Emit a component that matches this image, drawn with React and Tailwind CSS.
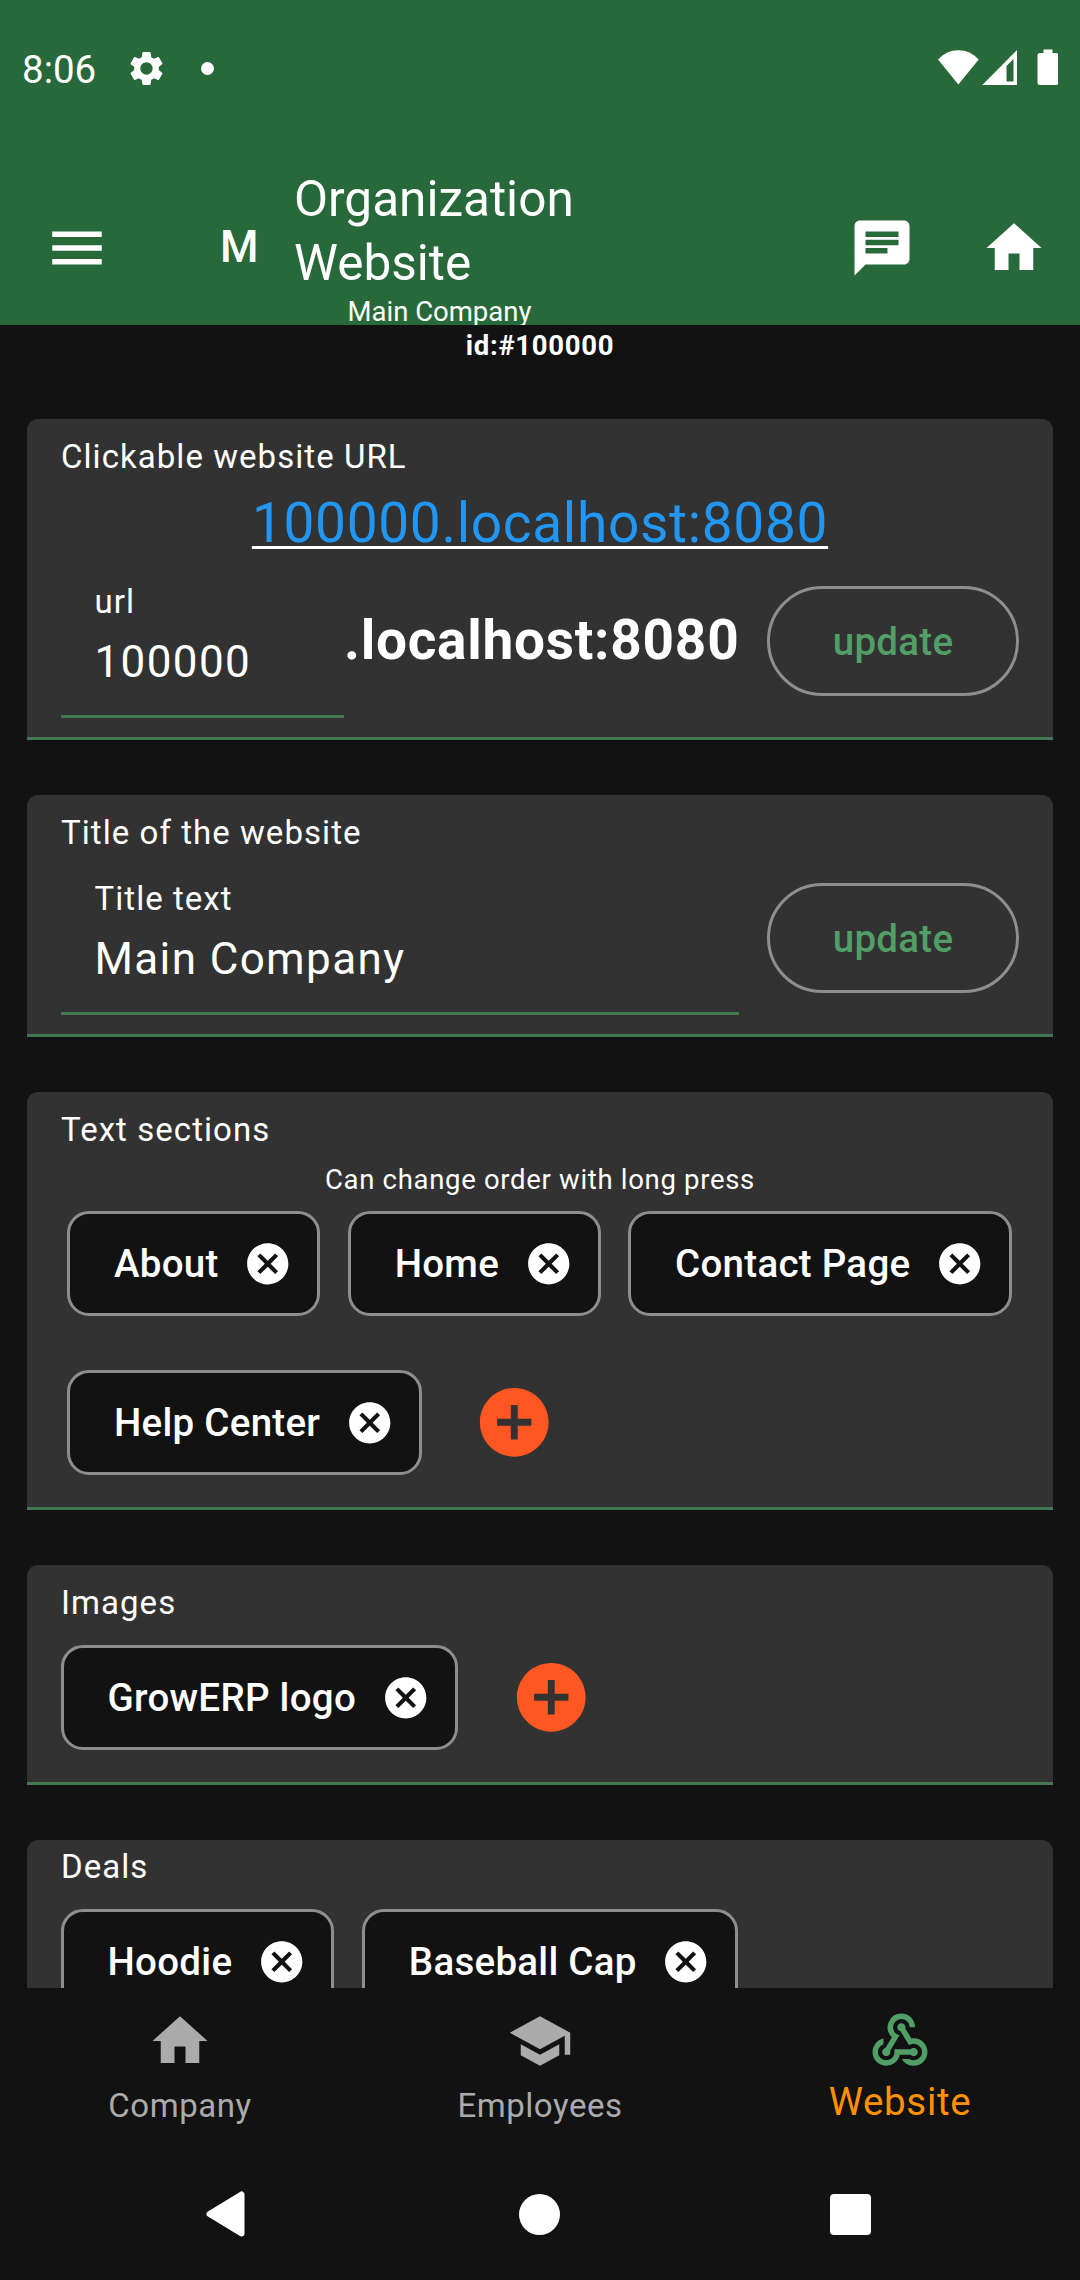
import React from "react";
import {
  MdSettings,
  MdMenu,
  MdChat,
  MdHome,
  MdCancel,
  MdAddCircle,
  MdSchool,
  MdWebhook,
} from "react-icons/md";

function StatusBar() {
  return (
    <div className="flex h-[171px] items-start justify-between pr-[22px] pl-[22px] text-white">
      <div className="flex items-center pt-[45px]">
        <span className="w-[74px] pt-[3px] text-[38.5px] leading-[44px]">8:06</span>
        <MdSettings size={41} className="ml-[30px]" />
        <span className="ml-[34px] h-[13px] w-[13px] rounded-full bg-white" />
      </div>
      <svg className="mt-[49px]" width="120" height="36" viewBox="0 0 120 36" fill="white">
        <path d="M0 10.500C11 -2 29.700 -2 40.700 10.500L20.350 35.500Z" />
        <path fillRule="evenodd" d="M79 1V36H44.300ZM75.500 10L68.500 17V32.500H75.500Z" />
        <path d="M105.500 .5h9v3.500h3.500q2.500 0 2.500 2.500v27q0 2.500 -2.500 2.500h-16q-2.500 0 -2.500 -2.500v-27q0 -2.500 2.500 -2.500h3.500z" />
      </svg>
    </div>
  );
}

function AppBar() {
  return (
    <div className="flex h-[154px] items-start text-white">
      <MdMenu size={66} className="mt-[44px] ml-11" />
      <span className="mt-[50px] ml-[110px] text-[44px] leading-[52px] font-medium">M</span>
      <div className="-mt-1 ml-[35.5px] w-[291px] text-[49.5px] leading-[64px]">
        <div>Organization</div>
        <div>Website</div>
        <div className="pt-px text-center text-[27.5px] leading-8">Main Company</div>
      </div>
      <MdChat size={66} className="mt-[44px] ml-auto" />
      <MdHome size={66} className="mt-[44px] mr-[33px] ml-[66px]" />
    </div>
  );
}

function Card({ label, className, labelClass = "pt-[18px]", children }) {
  return (
    <section
      className={`mx-[27px] shrink-0 rounded-t-[11px] border-b-[3px] border-[#427850] bg-[#323232] px-[34px] ${className}`}
    >
      <h2 className={`text-[33px] leading-10 tracking-[1.05px] ${labelClass}`}>{label}</h2>
      {children}
    </section>
  );
}

function Field({ label, value, className }) {
  return (
    <div className={`h-[137px] border-b-[3px] border-[#427850] pt-px pl-[33.5px] ${className}`}>
      <div className="text-[33px] leading-10 tracking-[1.04px]">{label}</div>
      <div className="mt-[15px] text-[44px] leading-[50px] tracking-[1.375px]">{value}</div>
    </div>
  );
}

function UpdateButton() {
  return (
    <button className="mt-[5px] ml-auto h-[110px] w-[252px] rounded-full border-[3px] border-[#8e8e8e] pt-[2px] text-[38.5px] font-medium tracking-[0.275px] text-[#519f66]">
      update
    </button>
  );
}

function Chip({ children }) {
  return (
    <div className="flex h-[105px] items-center rounded-[22px] border-[3px] border-[#8e8e8e] bg-[#121212] pr-[24.5px] pl-[44px] text-[38.5px] font-medium tracking-[0.275px] whitespace-nowrap">
      {children}
      <MdCancel size={49.5} className="ml-[24.5px]" />
    </div>
  );
}

function AddButton() {
  return <MdAddCircle size={82.5} className="ml-6 text-[#ff5722]" />;
}

function Tab({ icon: Icon, label, active }) {
  return (
    <div className="flex w-[360px] flex-col items-center pt-5">
      <Icon size={66} className={active ? "text-[#519f66]" : "text-[#ababab]"} />
      {active ? (
        <span className="mt-[6px] text-[38.5px] leading-[44px] tracking-[0.69px] text-[#ff9100]">{label}</span>
      ) : (
        <span className="mt-[12px] text-[33px] leading-10 tracking-[0.55px] text-[#ababab]">{label}</span>
      )}
    </div>
  );
}

export default function App() {
  return (
    <div className="flex h-[2280px] w-[1080px] flex-col overflow-hidden bg-[#121212] font-[Roboto,sans-serif] text-white">
      <header className="h-[325px] shrink-0 overflow-hidden bg-[#27693a]">
        <StatusBar />
        <AppBar />
      </header>

      <main className="flex h-[1663px] shrink-0 flex-col overflow-hidden">
        <div className="mt-[5px] h-[89px] shrink-0 text-center text-[27.5px] leading-8 font-bold tracking-[0.69px]">
          id:#100000
        </div>

        <Card label="Clickable website URL" className="h-[321px]">
          <div className="mt-4 h-[88px] text-center text-[55px] leading-[60px] tracking-[0.6875px]">
            <a className="text-[#2196f3] underline decoration-white decoration-[3px] underline-offset-[4px]">
              100000.localhost:8080
            </a>
          </div>
          <div className="flex items-start">
            <Field label="url" value="100000" className="w-[283px]" />
            <span className="mt-[29px] text-[55px] leading-[60px] font-bold tracking-[0.72px]">
              .localhost:8080
            </span>
            <UpdateButton />
          </div>
        </Card>

        <Card label="Title of the website" className="mt-[55px] h-[242px]">
          <div className="mt-[25px] flex items-start">
            <Field label="Title text" value="Main Company" className="w-[678px]" />
            <UpdateButton />
          </div>
        </Card>

        <Card label="Text sections" className="mt-[55px] h-[418px]">
          <p className="mt-[14px] text-center text-[27.5px] leading-8 tracking-[0.6875px]">
            Can change order with long press
          </p>
          <div className="mt-[15px] flex flex-wrap items-center gap-x-[27.5px] gap-y-[54px] pl-[6px]">
            <Chip>About</Chip>
            <Chip>Home</Chip>
            <Chip>Contact Page</Chip>
            <Chip>Help Center</Chip>
            <AddButton />
          </div>
        </Card>

        <Card label="Images" className="mt-[55px] h-[220px]">
          <div className="mt-[22px] -ml-[0.5px] flex items-center gap-x-[28px]">
            <Chip>GrowERP logo</Chip>
            <AddButton />
          </div>
        </Card>

        <Card label="Deals" className="mt-[55px] h-[221px]" labelClass="pt-[7px]">
          <div className="mt-[22px] -ml-[0.5px] flex items-center gap-x-[28px]">
            <Chip>Hoodie</Chip>
            <Chip>Baseball Cap</Chip>
          </div>
        </Card>
      </main>

      <nav className="flex h-[158px] shrink-0">
        <Tab icon={MdHome} label="Company" />
        <Tab icon={MdSchool} label="Employees" />
        <Tab icon={MdWebhook} label="Website" active />
      </nav>

      <div className="flex h-[134px] shrink-0 items-center justify-between pt-[2px] pr-[209px] pl-[205px]">
        <svg width="41" height="48" viewBox="0 0 41 48" fill="white" stroke="white" strokeWidth="6" strokeLinejoin="round">
          <path d="M4.500 24L36.500 4.500V43.500Z" />
        </svg>
        <span className="ml-[3px] h-[41px] w-[41px] rounded-full bg-white" />
        <span className="h-[41px] w-[41px] rounded-[4px] bg-white" />
      </div>
    </div>
  );
}
